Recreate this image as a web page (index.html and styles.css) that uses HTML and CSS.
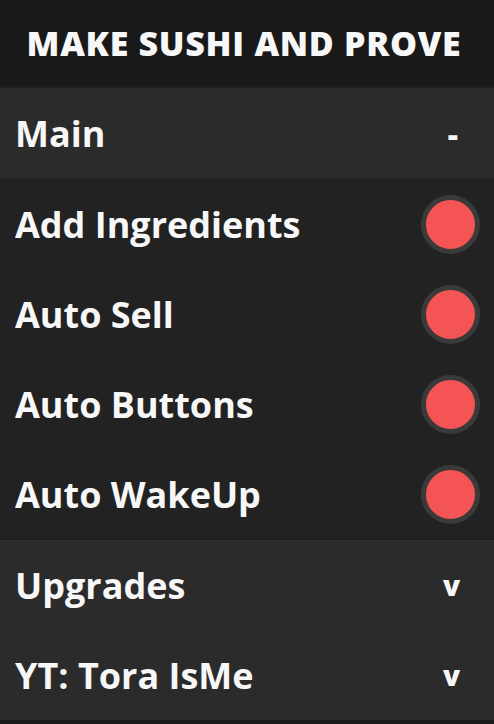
FILE: index.html
```html
<!DOCTYPE html>
<html lang="en">
<head>
    <meta charset="UTF-8">
    <title>Make Sushi And Prove</title>
    <link rel="stylesheet" href="styles.css">
</head>
<body>
    <div class="panel">
        <div class="title">MAKE SUSHI AND PROVE</div>

        <div class="section-head">
            <span>Main</span>
            <span class="marker">-</span>
        </div>
        <div class="section-body">
            <div class="toggle-row"><span>Add Ingredients</span><span class="toggle"></span></div>
            <div class="toggle-row"><span>Auto Sell</span><span class="toggle"></span></div>
            <div class="toggle-row"><span>Auto Buttons</span><span class="toggle"></span></div>
            <div class="toggle-row"><span>Auto WakeUp</span><span class="toggle"></span></div>
        </div>

        <div class="section-head closed">
            <span>Upgrades</span>
            <span class="marker">v</span>
        </div>
        <div class="section-head closed">
            <span>YT: Tora IsMe</span>
            <span class="marker">v</span>
        </div>
    </div>
</body>
</html>
```

FILE: styles.css
```css
body {
  margin: 0;
  background-color: #1c1c1c;
  font-family: "Open Sans", Lato, sans-serif;
  color: #f7f7f7;
}

.panel {
  width: 494px;
  height: 724px;
  display: flex;
  flex-direction: column;
  background-color: #1c1c1c;
}

/* Title bar */
.title {
  height: 86px;
  display: flex;
  align-items: center;
  justify-content: center;
  padding-right: 6px;
  background-color: #191919;
  font-size: 34px;
  font-weight: 800;
  letter-spacing: 0.7px;
  border-bottom: 2px solid #202020;
}

/* Section headers */
.section-head {
  height: 90px;
  display: flex;
  align-items: center;
  justify-content: space-between;
  padding: 0 36px 0 15px;
  background-color: #2b2b2b;
  font-size: 36px;
  font-weight: 700;
}

.section-head .marker {
  font-size: 32px;
  font-weight: 800;
}

.section-head.closed .marker {
  font-size: 28px;
  margin-right: -2px;
}

/* Toggle rows */
.section-body {
  background-color: #222222;
  border-top: 1px solid #262626;
  border-bottom: 1px solid #1d1d1d;
}

.toggle-row {
  height: 90px;
  display: flex;
  align-items: center;
  justify-content: space-between;
  padding: 0 14px 0 15px;
  font-size: 36px;
  font-weight: 700;
}

.toggle {
  width: 49px;
  height: 49px;
  border-radius: 50%;
  background-color: #f45454;
  border: 5px solid #3a3a3a;
}
```
